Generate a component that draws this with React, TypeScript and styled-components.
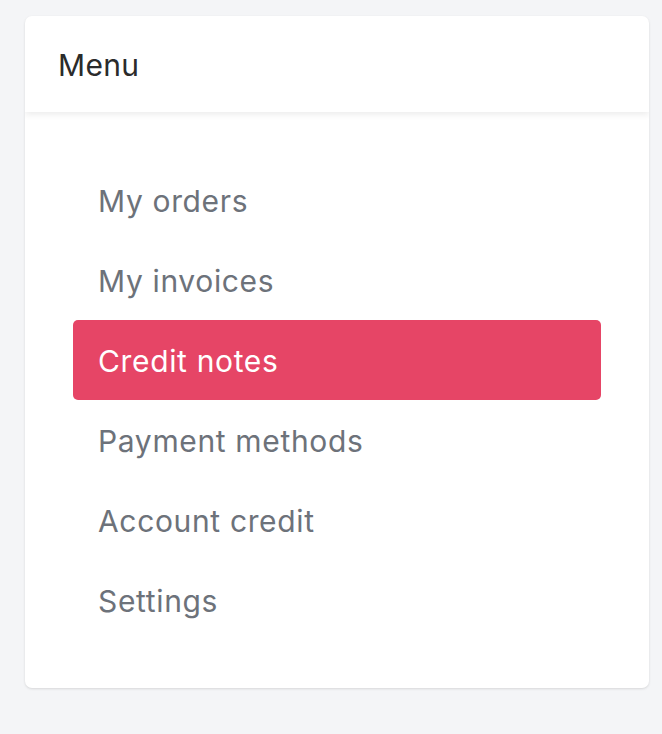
import React from "react";
import styled, { createGlobalStyle } from "styled-components";

const Global = createGlobalStyle`
  html, body { margin: 0; padding: 0; background: #f4f5f7; }
  body { font-family: Inter, "Liberation Sans", Arial, sans-serif; -webkit-font-smoothing: antialiased; }
`;

const Page = styled.div`
  padding: 16px 13px 46px 25px;
  min-height: 734px;
  box-sizing: border-box;
`;

const Card = styled.div`
  width: 624px;
  background: #ffffff;
  border-radius: 7px;
  box-shadow: 0 1px 3px rgba(0, 0, 0, 0.09), 0 1px 2px rgba(0, 0, 0, 0.04);
  overflow: hidden;
`;

const Header = styled.div`
  height: 96px;
  display: flex;
  align-items: center;
  padding: 2px 0 0 33px;
  box-sizing: border-box;
  font-size: 30px;
  letter-spacing: 0.3px;
  color: #2b2b2b;
  box-shadow: 0 3px 6px rgba(0, 0, 0, 0.07);
  position: relative;
`;

const List = styled.nav`
  display: flex;
  flex-direction: column;
  padding: 48px 48px 48px;
`;

const Item = styled.a<{ $active?: boolean }>`
  height: 80px;
  box-sizing: border-box;
  padding: 2px 0 0 25px;
  display: flex;
  align-items: center;
  border-radius: 5px;
  font-size: 30px;
  letter-spacing: 0.65px;
  text-decoration: none;
  color: ${(p) => (p.$active ? "#ffffff" : "#6d727a")};
  background: ${(p) => (p.$active ? "#e64566" : "transparent")};
`;

const items = [
  "My orders",
  "My invoices",
  "Credit notes",
  "Payment methods",
  "Account credit",
  "Settings",
];

export default function App() {
  return (
    <>
      <Global />
      <Page>
        <Card>
          <Header>Menu</Header>
          <List>
            {items.map((t) => (
              <Item key={t} href="#" $active={t === "Credit notes"}>
                {t}
              </Item>
            ))}
          </List>
        </Card>
      </Page>
    </>
  );
}
